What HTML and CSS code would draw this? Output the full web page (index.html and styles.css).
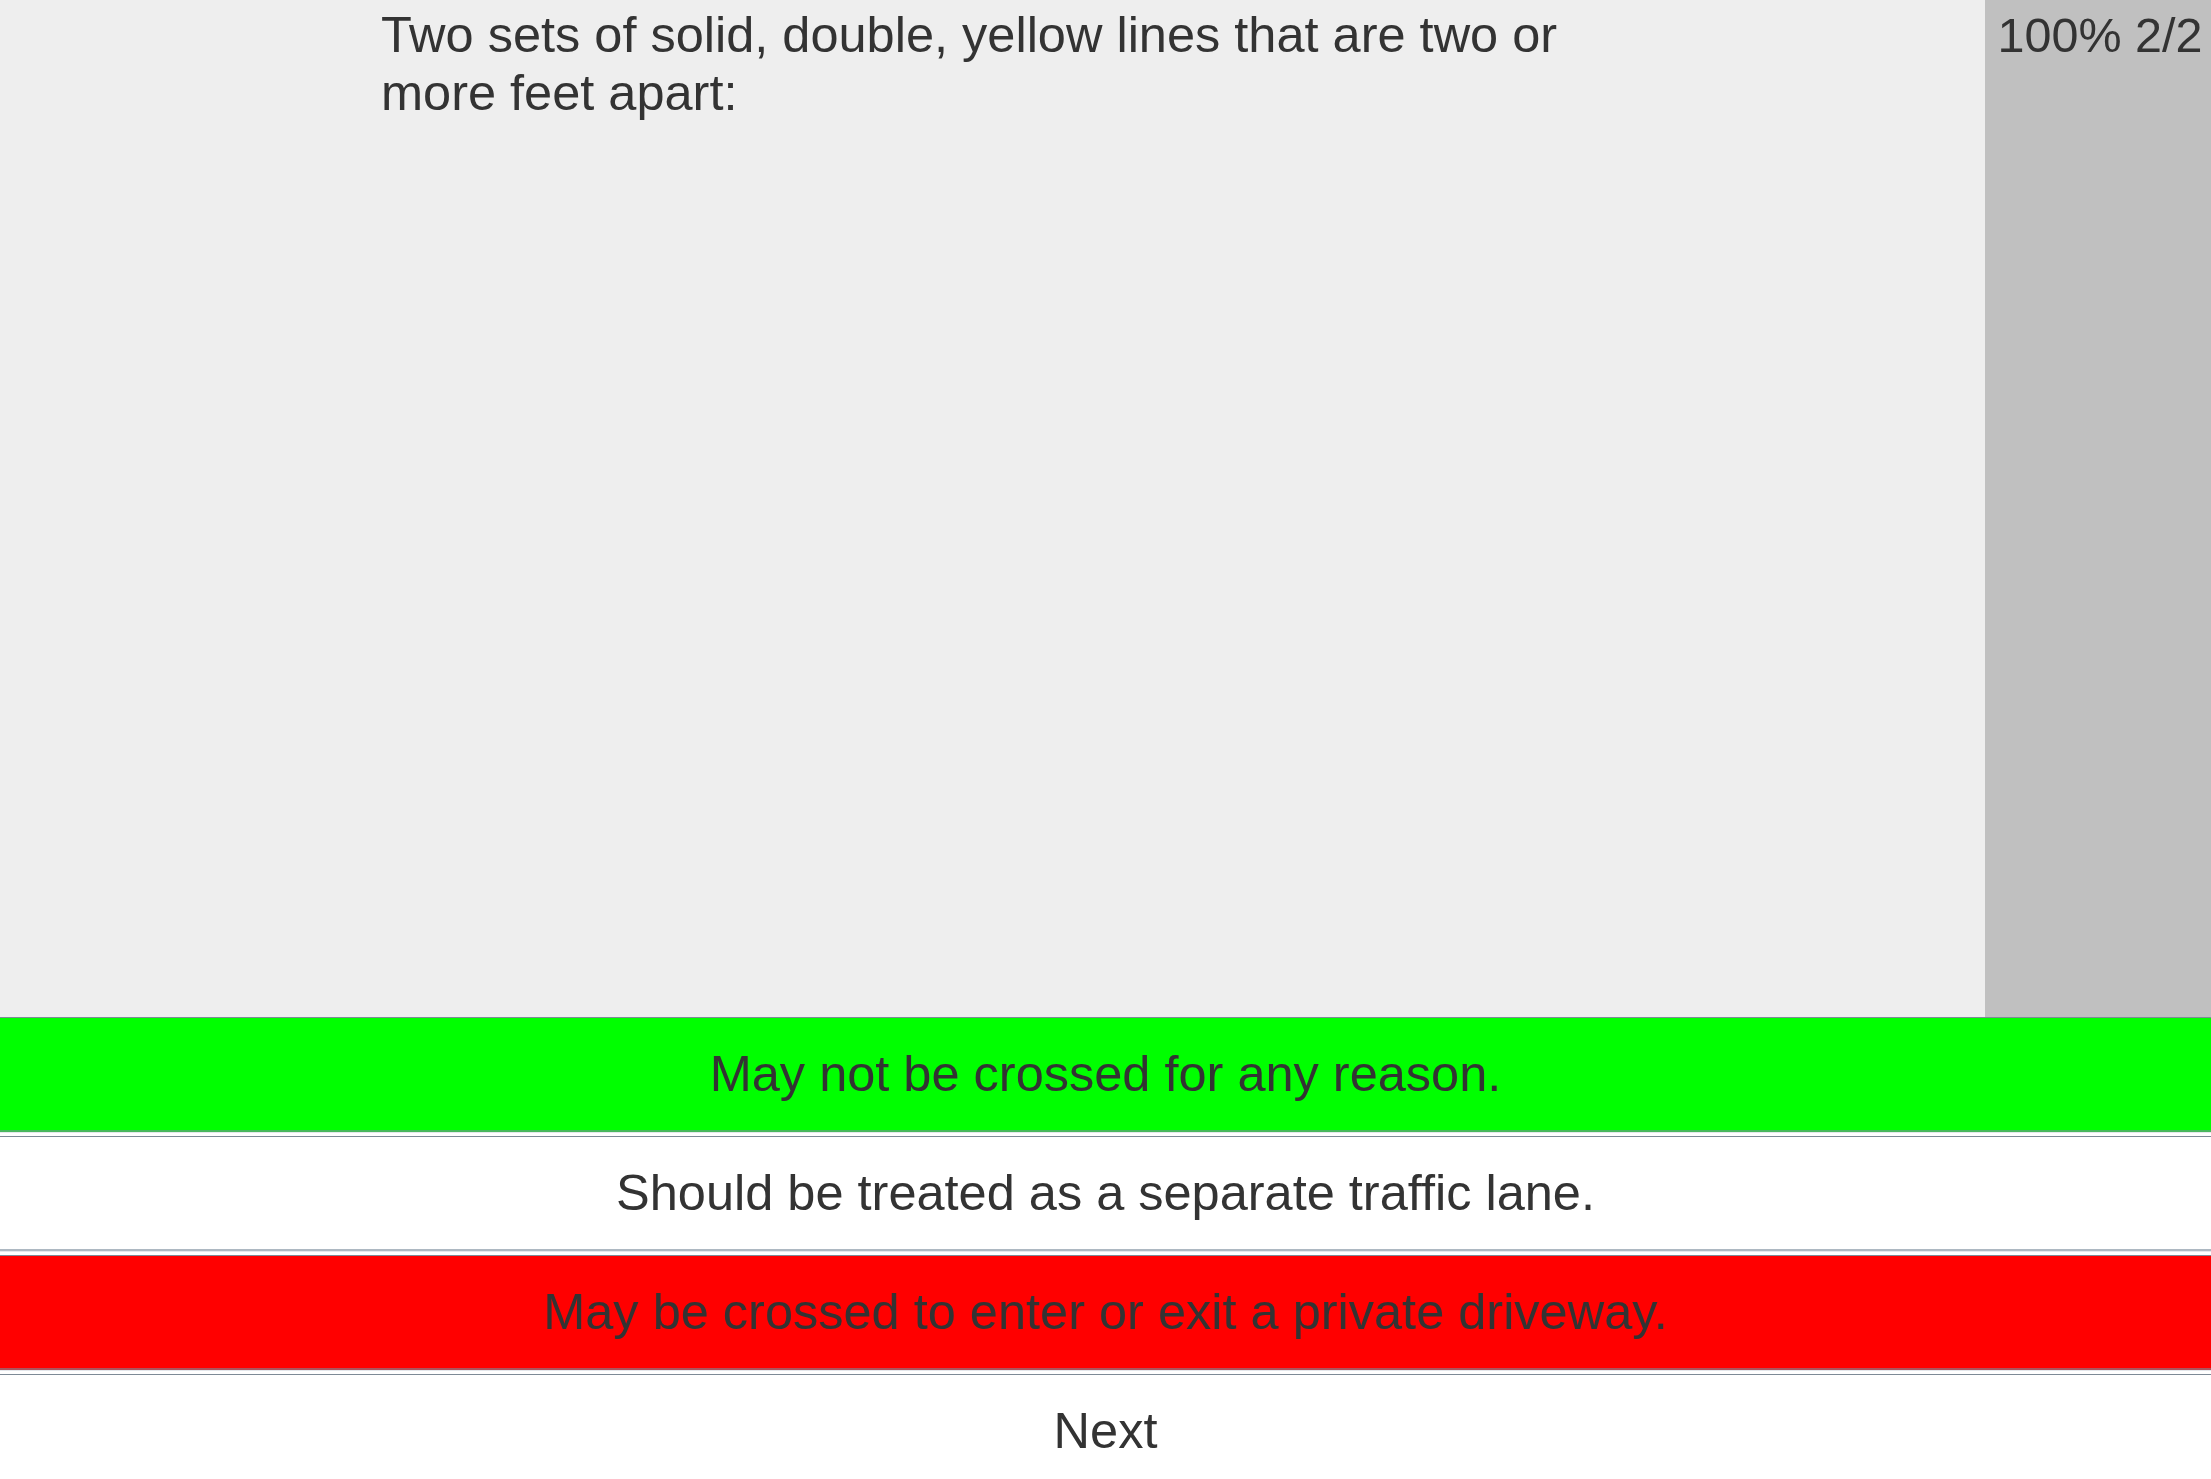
FILE: index.html
```html
<!DOCTYPE html>
<html>
<head>
<meta charset="utf-8">
<link rel="stylesheet" href="styles.css">
</head>
<body>
<div class="top">
  <div class="question">
    <p class="question-text">Two sets of solid, double, yellow lines that are two or more feet apart:</p>
  </div>
  <div class="sidebar">100% 2/2</div>
</div>
<div class="answers">
  <div class="answer correct">May not be crossed for any reason.</div>
  <div class="answer">Should be treated as a separate traffic lane.</div>
  <div class="answer wrong">May be crossed to enter or exit a private driveway.</div>
  <div class="answer next">Next</div>
</div>
</body>
</html>
```
FILE: styles.css
```css
html, body {
  margin: 0;
  padding: 0;
  background: #ffffff;
  font-family: "Liberation Sans", Arial, sans-serif;
  color: #333333;
}
.top {
  display: flex;
  height: 1017px;
}
.question {
  flex: 1;
  background: #eeeeee;
  padding: 6px 381px 0 381px;
}
.question-text {
  margin: 0;
  font-size: 50.5px;
  line-height: 58px;
}
.sidebar {
  width: 226px;
  background: #c0c0c0;
  font-size: 48.5px;
  line-height: 58px;
  padding: 6px 0 0 4px;
  box-sizing: border-box;
  text-align: center;
  white-space: nowrap;
}
.answers {
  display: flex;
  flex-direction: column;
}
.answer {
  height: 112px;
  line-height: 112px;
  font-size: 50.5px;
  text-align: center;
  background: #ffffff;
  border-top: 1px solid #7d8a96;
  border-bottom: 2px solid rgba(119, 136, 153, 0.6);
  box-shadow: 0 1px 0 rgba(119, 136, 153, 0.2);
  margin-bottom: 4px;
}
.answer.correct {
  background: #00ff00;
}
.answer.wrong {
  background: #ff0000;
}
```
